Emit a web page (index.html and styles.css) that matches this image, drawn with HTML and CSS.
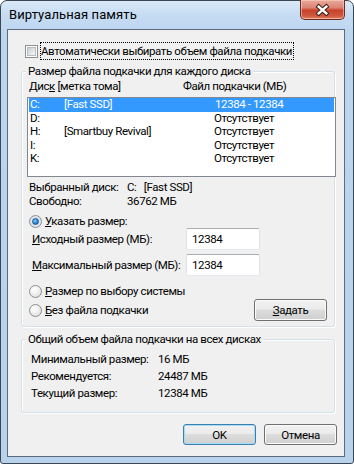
FILE: index.html
```html
<!DOCTYPE html>
<html lang="ru">
<head>
<meta charset="utf-8">
<link rel="stylesheet" href="styles.css">
</head>
<body>
<div class="window">
  <div class="titlebar">
    <span class="title">Виртуальная память</span>
    <div class="close">
      <svg width="45" height="19" viewBox="0 0 45 19">
        <path d="M18.5 5.5 L26.5 12.5 M26.5 5.5 L18.5 12.5" stroke="#3d1f1a" stroke-width="4.6" stroke-linecap="square" fill="none"/>
        <path d="M18.5 5.5 L26.5 12.5 M26.5 5.5 L18.5 12.5" stroke="#ffffff" stroke-width="2.6" stroke-linecap="square" fill="none"/>
      </svg>
    </div>
  </div>
  <div class="client">
    <div class="auto">
      <span class="checkbox"><span class="checkbox-in"></span></span>
      <span class="focus">Автоматически выбирать объем файла подкачки</span>
    </div>

    <div class="group g1">
      <div class="gtitle">Размер файла подкачки для каждого диска</div>
      <div class="listhead"><span class="h1">Дис<u>к</u> [метка тома]</span><span class="h2">Файл подкачки (МБ)</span></div>
      <div class="listbox">
        <div class="item sel"><span class="c1">C:</span><span class="c2">[Fast SSD]</span><span class="c3">12384 - 12384</span></div>
        <div class="item"><span class="c1">D:</span><span class="c2"></span><span class="c3">Отсутствует</span></div>
        <div class="item"><span class="c1">H:</span><span class="c2">[Smartbuy Revival]</span><span class="c3">Отсутствует</span></div>
        <div class="item"><span class="c1">I:</span><span class="c2"></span><span class="c3">Отсутствует</span></div>
        <div class="item"><span class="c1">K:</span><span class="c2"></span><span class="c3">Отсутствует</span></div>
      </div>
      <div class="info">
        <span>Выбранный диск:</span><span>C:&nbsp;&nbsp;&nbsp;[Fast SSD]</span>
        <span>Свободно:</span><span>36762 МБ</span>
      </div>
      <div class="radio-row r1"><span class="radio checked"><span class="dot"></span></span><span><u>У</u>казать размер:</span></div>
      <div class="size-row"><span class="size-label"><u>И</u>сходный размер (МБ):</span><span class="textbox">12384</span></div>
      <div class="size-row s2"><span class="size-label"><u>М</u>аксимальный размер (МБ):</span><span class="textbox">12384</span></div>
      <div class="radio-row r3"><span class="radio"></span><span><u>Р</u>азмер по выбору системы</span></div>
      <div class="last-row">
        <div class="radio-row"><span class="radio"></span><span><u>Б</u>ез файла подкачки</span></div>
        <span class="btn btn-set"><u>З</u>адать</span>
      </div>
    </div>

    <div class="group g2">
      <div class="gtitle">Общий объем файла подкачки на всех дисках</div>
      <div class="totals">
        <span>Минимальный размер:</span><span>16 МБ</span>
        <span>Рекомендуется:</span><span>24487 МБ</span>
        <span>Текущий размер:</span><span>12384 МБ</span>
      </div>
    </div>

    <div class="buttons">
      <span class="btn btn-default">OK</span>
      <span class="btn">Отмена</span>
    </div>
  </div>
</div>
</body>
</html>
```

FILE: styles.css
```css
* { box-sizing: border-box; }

body {
  margin: 0;
  width: 354px;
  height: 464px;
  overflow: hidden;
  background: #ffffff;
  font-family: Roboto, "Noto Sans", sans-serif;
  font-size: 11.5px;
  letter-spacing: -0.4px;
  color: #000;
  white-space: nowrap;
}

u { text-decoration: underline; text-underline-offset: 1px; }

.window {
  width: 354px;
  height: 464px;
  border: 1px solid #3b4653;
  border-radius: 7px 7px 3px 3px;
  background: linear-gradient(#dbe9f8 0px, #c6dcf3 14px, #bdd6ef 30px, #b9d2ec 100%);
  padding: 0 8px 6px 6px;
  display: flex;
  flex-direction: column;
}

.titlebar {
  height: 28px;
  flex: none;
  display: flex;
  align-items: flex-start;
}

.title {
  margin-left: 2px;
  margin-top: 6px;
  line-height: 16px;
  font-size: 13px;
  letter-spacing: 0.1px;
}

.close {
  margin-left: auto;
  margin-top: -1px;
  width: 45px;
  height: 20px;
  border: 1px solid #6b2b22;
  border-top: none;
  border-radius: 0 0 5px 5px;
  background: linear-gradient(#e9a99b 0%, #dc8574 40%, #c7412b 55%, #cf5a3f 85%, #e28b6b 100%);
  box-shadow: inset 0 0 0 1px rgba(255, 215, 200, 0.55);
  display: flex;
}

.close svg { display: block; margin-top: 1px; }

.client {
  flex: 1;
  background: #f0f0f0;
  border: 1px solid #5b6b80;
  padding: 12px 0 0 13px;
  display: flex;
  flex-direction: column;
}

.auto {
  height: 18px;
  display: flex;
  align-items: center;
  margin-left: 4px;
}

.checkbox {
  width: 13px;
  height: 13px;
  border: 1px solid #8e8f8f;
  background: #fff;
  padding: 1px;
  margin-right: 2px;
  display: flex;
}

.checkbox-in {
  flex: 1;
  background: linear-gradient(135deg, #cbcfd5, #f6f6f6);
  border: 1px solid #b8bbc0;
}

.focus {
  height: 18px;
  line-height: 16px;
  border: 1px dotted #000;
  padding: 0 1px 0 0;
}

.group {
  position: relative;
  width: 314px;
  border: 1px solid #d5dfe5;
  border-radius: 3px;
  box-shadow: inset 1px 1px 0 #ffffff, 1px 1px 0 #ffffff;
}

.gtitle {
  position: absolute;
  top: -9px;
  left: 4px;
  padding: 0 2px;
  line-height: 16px;
  background: #f0f0f0;
}

.g1 {
  margin-top: 11px;
  height: 256px;
  padding: 7px 0 0 5px;
}

.listhead {
  height: 14px;
  line-height: 14px;
  display: flex;
  padding-left: 2px;
}

.h1 { width: 154px; }

.listbox {
  margin-top: 4px;
  width: 309px;
  height: 80px;
  border: 1px solid #828790;
  background: #fff;
  padding: 0 1px;
}

.item {
  height: 13.5px;
  line-height: 13.5px;
  display: flex;
}

.item.sel {
  background: #3399ff;
  color: #fff;
}

.c1 { width: 35px; padding-left: 1px; }
.c2 { width: 150px; }
.sel .c3 { padding-left: 1px; }

.info {
  margin-top: 3px;
  display: grid;
  grid-template-columns: 98px auto;
  grid-auto-rows: 14px;
  line-height: 14px;
  padding-left: 2px;
}

.radio-row {
  display: flex;
  align-items: center;
  height: 14px;
  line-height: 14px;
}

.r1 { margin-top: 6px; margin-left: 2px; }
.r3 { margin-top: 8px; margin-left: 2px; }

.radio {
  width: 13px;
  height: 13px;
  border-radius: 50%;
  border: 1px solid #8e8f8f;
  background: radial-gradient(circle at 40% 35%, #ffffff 0%, #f4f4f4 35%, #d4d4d4 100%);
  margin-right: 3px;
  display: flex;
  align-items: center;
  justify-content: center;
  flex: none;
}

.radio.checked {
  background: radial-gradient(circle at 50% 50%, #eef6fd 0%, #dbe6f0 60%, #c9d3dc 100%);
}

.dot {
  width: 7px;
  height: 7px;
  border-radius: 50%;
  background: radial-gradient(circle at 40% 35%, #9fd2f6 0%, #3a8fd6 45%, #16549a 100%);
  border: 1px solid #1d5a96;
}

.size-row {
  height: 22px;
  display: flex;
  align-items: center;
  padding-left: 5px;
}

.s2 { margin-top: 4px; }

.size-label { width: 154px; }

.textbox {
  width: 74px;
  height: 22px;
  background: #fff;
  border: 1px solid #e2e3ea;
  border-top-color: #abadb3;
  border-bottom-color: #e3e9ef;
  border-radius: 2px;
  padding: 3px 0 0 5px;
  line-height: 14px;
}

.last-row {
  margin-top: 1px;
  margin-left: 2px;
  height: 22px;
  width: 298px;
  display: flex;
  align-items: center;
  justify-content: space-between;
}

.btn {
  width: 73px;
  height: 21px;
  border: 1px solid #707070;
  border-radius: 3px;
  background: linear-gradient(#f2f2f2 0%, #ebebeb 45%, #dddddd 50%, #cfcfcf 100%);
  box-shadow: inset 0 0 0 1px #fbfbfb;
  display: flex;
  align-items: center;
  justify-content: center;
  line-height: 14px;
}

.btn-set { height: 22px; }

.btn-default {
  border-color: #3c7fb1;
  box-shadow: inset 0 0 0 1px #a8dcf6;
}

.g2 {
  margin-top: 12px;
  height: 74px;
  padding: 11px 0 0 9px;
}

.totals {
  display: grid;
  grid-template-columns: 127px auto;
  grid-auto-rows: 17px;
  line-height: 17px;
}

.buttons {
  margin-top: 11px;
  margin-right: 7px;
  display: flex;
  justify-content: flex-end;
  gap: 8px;
}
```
